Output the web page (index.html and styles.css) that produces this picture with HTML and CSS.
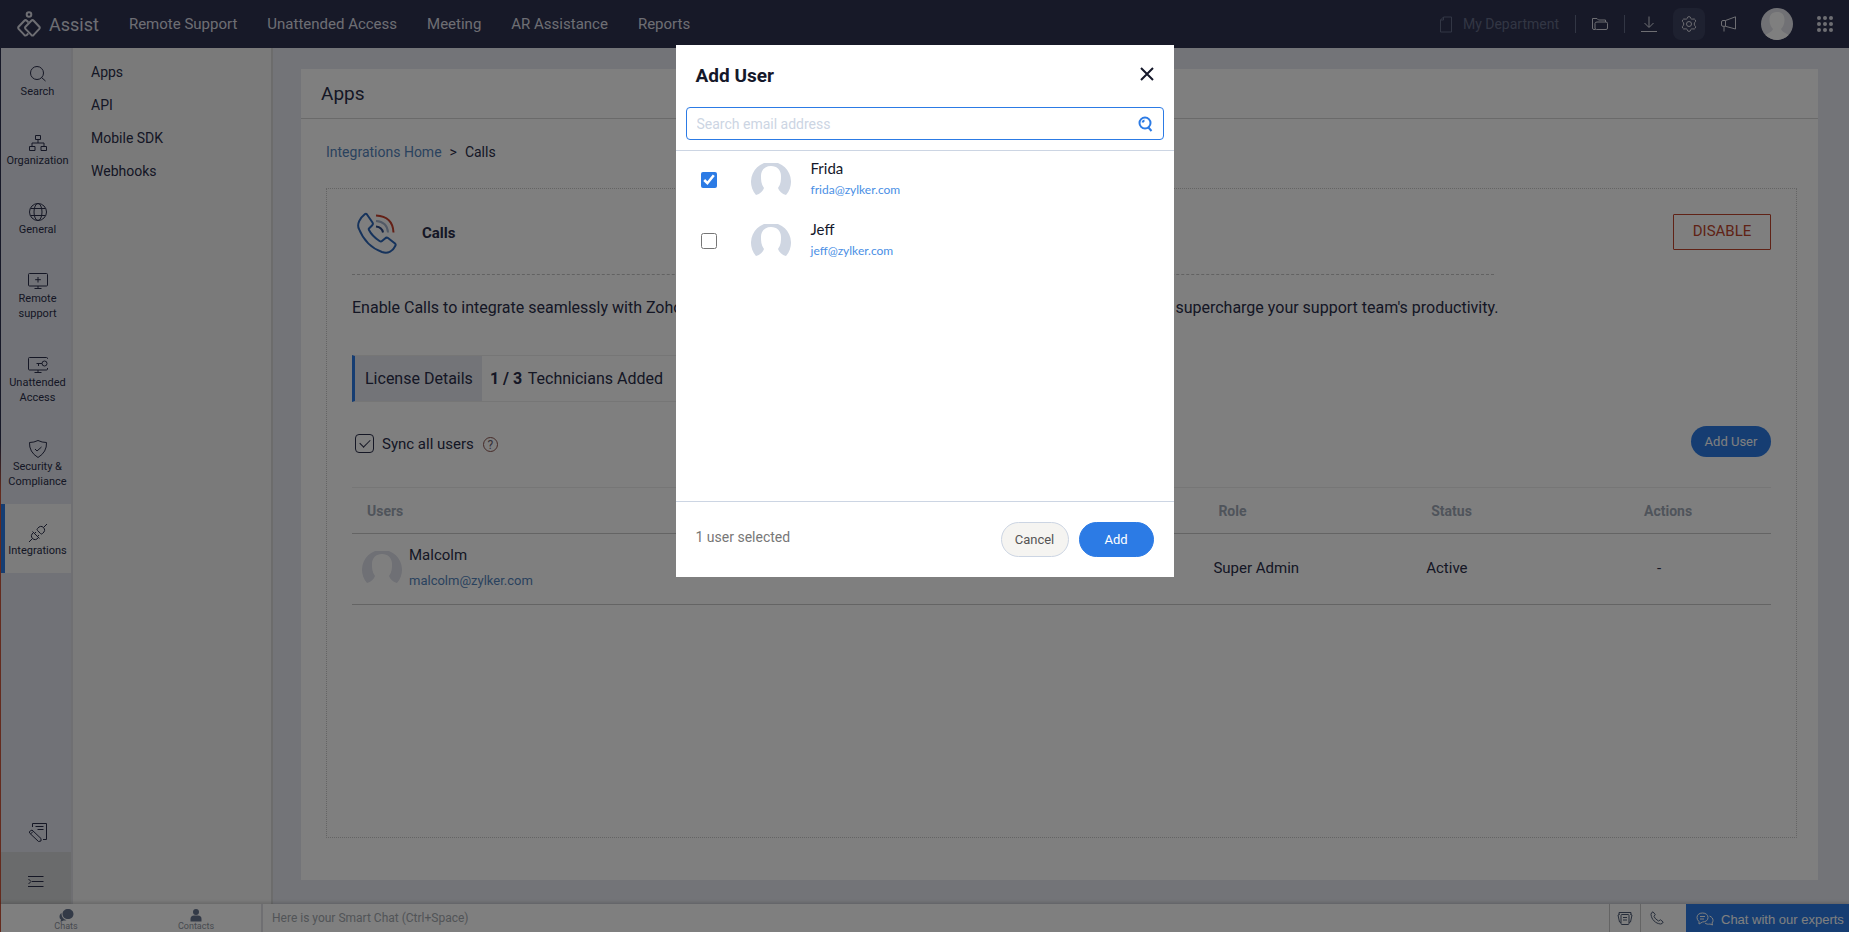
FILE: index.html
```
<!DOCTYPE html>
<html lang="en">
<head>
    <meta charset="UTF-8">
    <meta name="viewport" content="width=device-width, initial-scale=1.0">
    <title>Assist - Integrations</title>
    <link rel="stylesheet" href="styles.css">
</head>
<body>
    <!-- Shared avatar shape -->
    <svg class="defs" aria-hidden="true">
        <symbol id="avatar" viewBox="0 0 40 34">
            <path d="M5 32A20 20 0 1 1 35 32C31 31 28 28 27 25C30 21 30 17 30 13C30 7 26 3 20 3S10 7 10 13C10 17 10 21 13 25C12 28 9 31 5 32Z"/>
        </symbol>
    </svg>

    <div class="app">
        <header class="topbar">
            <a href="#" class="brand">
                <svg width="24" height="26" viewBox="0 0 24 26">
                    <circle cx="12" cy="3.500" r="2.300"/>
                    <path d="M14.300 9.700Q15.500 8.500 16.700 9.700L22.300 15.700Q23.200 16.800 22.300 17.900L16.700 23.900Q15.500 25 14.300 23.900L8.500 17.900Q7.600 16.800 8.500 15.700Z"/>
                    <path d="M11.300 11.200L9.800 9.700Q8.500 8.500 7.300 9.700L1.600 15.700Q.8 16.800 1.600 17.900L7.300 23.900Q8.500 25 9.800 23.900L11.300 22.400"/>
                </svg>
                <span>Assist</span>
            </a>
            <nav class="main-nav">
                <a href="#">Remote Support</a>
                <a href="#">Unattended Access</a>
                <a href="#">Meeting</a>
                <a href="#">AR Assistance</a>
                <a href="#">Reports</a>
            </nav>
            <div class="tools">
                <button class="department">
                    <svg width="12" height="17" viewBox="0 0 12 17"><path d="M3.500 1H11.500V16H.5V4L3.500 1V4H.5"/></svg>
                    My Department
                </button>
                <span class="divider"></span>
                <button class="tool" aria-label="Files">
                    <svg width="16" height="16" viewBox="0 0 16 16"><path d="M3.500 13.500H2Q.5 13.500 .5 12V2.500H5L6.500 4H13.500V6M5 6H14Q15.500 6 15.500 7.500V12Q15.500 13.500 14 13.500H4.500Q3 13.500 3 12V7.500Q3 6 5 6"/></svg>
                </button>
                <span class="divider"></span>
                <button class="tool" aria-label="Download">
                    <svg width="16" height="16" viewBox="0 0 16 16"><path d="M8 .5V11M3.500 7L8 11.500L12.500 7M0 15.500H16"/></svg>
                </button>
                <button class="tool tool-active" aria-label="Settings">
                    <svg width="16" height="16" viewBox="0 0 16 16"><circle cx="8" cy="8" r="2.500"/><path d="M6.200 2.500Q6.300.6 8 .6T9.800 2.500Q10.500 3.400 11.800 3.100Q13.600 2.500 14.400 4Q15.200 5.500 13.600 6.600Q12.800 8 13.600 9.400Q15.200 10.500 14.400 12Q13.600 13.500 11.800 12.900Q10.500 12.600 9.800 13.500Q9.700 15.400 8 15.400T6.200 13.500Q5.500 12.600 4.200 12.900Q2.400 13.500 1.600 12Q.8 10.500 2.400 9.400Q3.200 8 2.400 6.600Q.8 5.500 1.600 4Q2.400 2.500 4.200 3.100Q5.500 3.400 6.200 2.500Z"/></svg>
                </button>
                <button class="tool" aria-label="Announcements">
                    <svg width="16" height="16" viewBox="0 0 16 16"><path d="M4.500 4.500L14.500.8V13L4.500 10.300ZM4.500 4.500H2Q.5 4.500 .5 6V9Q.5 10.300 2 10.300H4.500M3 10.500V15.500"/></svg>
                </button>
                <button class="profile" aria-label="Profile">
                    <svg width="32" height="32" viewBox="0 0 32 32"><circle class="profile-bg" cx="16" cy="16" r="16"/><path class="profile-person" d="M16 4C10 4 8.500 8 8.500 12C8.500 16 10 19 12 21C11 24 7 25 4.500 27A16 16 0 0 0 27.500 27C25 25 21 24 20 21C22 19 23.500 16 23.500 12C23.500 8 22 4 16 4Z"/></svg>
                </button>
                <button class="tool tool-dots" aria-label="All apps">
                    <svg width="16" height="16" viewBox="0 0 16 16"><circle cx="2" cy="2" r="2"/><circle cx="8" cy="2" r="2"/><circle cx="14" cy="2" r="2"/><circle cx="2" cy="8" r="2"/><circle cx="8" cy="8" r="2"/><circle cx="14" cy="8" r="2"/><circle cx="2" cy="14" r="2"/><circle cx="8" cy="14" r="2"/><circle cx="14" cy="14" r="2"/></svg>
                </button>
            </div>
        </header>

        <div class="body">
            <div class="edge"></div>
            <nav class="rail">
                <a href="#" class="rail-item">
                    <svg width="20" height="20" viewBox="0 0 20 20"><circle cx="9" cy="9" r="6.500"/><path d="M13.500 13.500L17.500 17"/></svg>
                    Search
                </a>
                <a href="#" class="rail-item">
                    <svg width="20" height="20" viewBox="0 0 20 20"><path d="M7.500 2.500H12.500V6.500H7.500ZM1.500 13.500H7V17.500H1.500ZM13 13.500H18.500V17.500H13ZM10 6.500V10M4 13.500V10H16V13.500"/></svg>
                    Organization
                </a>
                <a href="#" class="rail-item">
                    <svg width="20" height="20" viewBox="0 0 20 20"><circle cx="10" cy="10" r="8.500"/><ellipse cx="10" cy="10" rx="4" ry="8.500"/><path d="M2.500 6.500H17.500M2.500 13.500H17.500"/></svg>
                    General
                </a>
                <a href="#" class="rail-item">
                    <svg width="20" height="20" viewBox="0 0 20 20"><rect x=".5" y="2.500" width="19" height="12.500" rx="1"/><path d="M10 6V11.500M7.200 8.700H12.800M10 15V17.500M6.500 17.500H13.500"/></svg>
                    Remote<br>support
                </a>
                <a href="#" class="rail-item">
                    <svg width="20" height="20" viewBox="0 0 20 20"><path d="M19.500 4V3.500Q19.500 2.500 18.500 2.500H1.500Q.5 2.500 .5 3.500V14Q.5 15 1.500 15H18.500Q19.500 15 19.500 14V13M10 15V17.500M6.500 17.500H13.500M14 8.500H8.500M10.500 8.500V11"/><circle cx="16.500" cy="8.500" r="2.500"/></svg>
                    Unattended<br>Access
                </a>
                <a href="#" class="rail-item">
                    <svg width="20" height="20" viewBox="0 0 20 20"><path d="M10 1.500Q14 3.500 18.500 3.500Q19 13 10 18.500Q1 13 1.500 3.500Q6 3.500 10 1.500ZM7 10L9 12L13.500 8"/></svg>
                    Security &amp;<br>Compliance
                </a>
                <a href="#" class="rail-item rail-active">
                    <svg width="20" height="20" viewBox="0 0 20 20"><path d="M1 19L4.500 15.500M15.500 4.500L19 1M5.500 9.500Q1.800 12.500 4.500 15.500Q7.500 18.200 10.500 14.500M4.500 8.500L11.500 15.500M9.500 5.500Q12.500 1.800 15.500 4.500Q18.200 7.500 14.500 10.500Q13.500 11.500 12.500 10.500L9.500 7.500Q8.500 6.500 9.500 5.500M6.500 10.500L8 9M9.500 13.500L11 12"/></svg>
                    Integrations
                </a>
                <a href="#" class="rail-feedback" aria-label="Feedback">
                    <svg width="20" height="20" viewBox="0 0 20 20"><path d="M4.500 5V1.500H18.500V17.500H15M7.500 4.500H15.500M9.500 7.500H15.500M1.500 9.500L4 8L13 16.500V19L10.500 19.500L1.500 11ZM2.500 12L5 9.500"/></svg>
                </a>
                <button class="rail-toggle" aria-label="Collapse menu">
                    <svg width="16" height="14" viewBox="0 0 16 14"><path d="M0 1.500H15.500M4 6.500H15.500M0 11.500H15.500M.5 4L3 6.500L.5 9"/></svg>
                </button>
            </nav>

            <nav class="submenu">
                <a href="#">Apps</a>
                <a href="#">API</a>
                <a href="#">Mobile SDK</a>
                <a href="#">Webhooks</a>
            </nav>

            <main class="content">
                <section class="card">
                    <h1>Apps</h1>
                    <div class="breadcrumb">
                        <a href="#">Integrations Home</a>
                        <span>&gt;</span>
                        <span>Calls</span>
                    </div>
                    <div class="integration">
                        <div class="integration-head">
                            <div class="integration-title">
                                <svg width="42" height="42" viewBox="0 0 42 42">
                                    <path class="phone" d="M9 2C4 6 .5 12 3 17C7 27 15 36 26 40C32 42 37 39 39.500 33.500Q40 32.500 39 31.500L32 26Q30.500 25 29 26.500L26 29Q25 30 23.500 29Q16 24 13 18Q12.500 17 13 16.500L16 13.500Q17.500 12 16.500 10.500L11 2.500Q10 1.300 9 2Z"/>
                                    <path class="wave-out" d="M20 3.500C31 4 37 10 37.500 20.500"/>
                                    <path class="wave-mid" d="M20 9C27.500 9.500 31.500 13 32 20.500"/>
                                    <path class="wave-in" d="M20 14.500C24 15 26.500 17 27 20.500"/>
                                </svg>
                                <h2>Calls</h2>
                            </div>
                            <button class="disable">DISABLE</button>
                        </div>
                        <p class="description">Enable Calls to integrate seamlessly with Zoho Assist, connect with customers over voice, resolve issues faster, and supercharge your support team's productivity.</p>
                        <div class="license">
                            <span class="license-label">License Details</span>
                            <span class="license-count"><b>1 / 3</b> Technicians Added</span>
                        </div>
                        <div class="sync-row">
                            <label class="sync">
                                <input type="checkbox" class="sync-box" checked>
                                Sync all users
                            </label>
                            <button class="help" aria-label="Help">?</button>
                            <button class="add-user">Add User</button>
                        </div>
                        <table class="users">
                            <thead>
                                <tr>
                                    <th class="col-user">Users</th>
                                    <th class="col-role">Role</th>
                                    <th class="col-status">Status</th>
                                    <th class="col-actions">Actions</th>
                                </tr>
                            </thead>
                            <tbody>
                                <tr>
                                    <td>
                                        <div class="user">
                                            <svg class="avatar" width="40" height="34"><use href="#avatar"/></svg>
                                            <div>
                                                <div class="user-name">Malcolm</div>
                                                <a href="#" class="user-email">malcolm@zylker.com</a>
                                            </div>
                                        </div>
                                    </td>
                                    <td>Super Admin</td>
                                    <td>Active</td>
                                    <td class="no-action">-</td>
                                </tr>
                            </tbody>
                        </table>
                    </div>
                </section>
            </main>
        </div>

        <footer class="chatbar">
            <button class="chat-tab">
                <svg width="15" height="13" viewBox="0 0 15 13"><path d="M9 0C12 0 14.500 2 14.500 5S12 10 9 10S3.500 8 3.500 5S6 0 9 0ZM2.500 4C1 5 .5 6.500 .5 7.500C.5 9 1 10 2 10.500L1.500 13L4.500 11.500C5.500 11.700 6.500 11.500 7.500 11C4.500 10.500 2.500 8 2.500 4Z"/></svg>
                Chats
            </button>
            <button class="chat-tab">
                <svg width="12" height="13" viewBox="0 0 12 13"><circle cx="6" cy="3" r="3"/><path d="M.5 10Q.5 6.500 4 6.500H8Q11.500 6.500 11.500 10V12.500H.5Z"/></svg>
                Contacts
            </button>
            <input type="text" class="smart-chat" aria-label="Smart Chat" placeholder="Here is your Smart Chat (Ctrl+Space)">
            <button class="chat-tool" aria-label="Notes">
                <svg width="16" height="14" viewBox="0 0 16 14"><rect x="4" y="3.500" width="8" height="10" rx="1"/><path d="M6 6.500H10M6 9H10M4 11.500L2.500 11L1 4L3 3M12 11.500L13.500 11L15 4L13 3M2 3V1.500L14 1.500V3"/></svg>
            </button>
            <button class="chat-tool chat-call" aria-label="Call">
                <svg width="14" height="14" viewBox="0 0 14 14"><path d="M3 .8Q1 1.500 1 3.500C1.500 8.500 5.500 12.500 10.500 13Q12.500 13 13.200 11L10.500 8.800L8.500 10Q5 8 4 5.500L5.200 3.500Z"/></svg>
            </button>
            <button class="experts">
                <svg width="18" height="14" viewBox="0 0 18 14"><path d="M3 9.500Q1 8 1 5.500C1 3 3 1 6.500 1C10 1 12 3 12 5.500S10 10 6.500 10L3 12ZM4 4.500H9M4 7H8M13.500 4C16 5 17 6.500 17 8.500Q17 10 16 11L16.500 13L14 12C12 12.500 10 12 9 11"/></svg>
                Chat with our experts
            </button>
        </footer>

        <div class="overlay">
            <div class="modal" role="dialog" aria-labelledby="modalTitle">
                <div class="modal-head">
                    <h2 id="modalTitle">Add User</h2>
                    <button class="close" aria-label="Close">
                        <svg width="14" height="14" viewBox="0 0 14 14"><path d="M1 1L13 13M13 1L1 13"/></svg>
                    </button>
                </div>
                <div class="search">
                    <input type="text" aria-label="Search email address" placeholder="Search email address">
                    <svg width="16" height="16" viewBox="0 0 16 16"><circle cx="8" cy="7" r="5.500"/><path d="M5.500 6.500Q5.800 4.800 7.500 4.500M11 11L14.500 15"/></svg>
                </div>
                <div class="modal-list">
                    <label class="pick">
                        <input type="checkbox" checked>
                        <svg class="avatar" width="40" height="34"><use href="#avatar"/></svg>
                        <span class="pick-text">
                            <span class="pick-name">Frida</span>
                            <span class="pick-email">frida@zylker.com</span>
                        </span>
                    </label>
                    <label class="pick">
                        <input type="checkbox">
                        <svg class="avatar" width="40" height="34"><use href="#avatar"/></svg>
                        <span class="pick-text">
                            <span class="pick-name">Jeff</span>
                            <span class="pick-email">jeff@zylker.com</span>
                        </span>
                    </label>
                </div>
                <div class="modal-foot">
                    <span class="selected">1 user selected</span>
                    <button class="cancel">Cancel</button>
                    <button class="add">Add</button>
                </div>
            </div>
        </div>
    </div>
</body>
</html>
```
FILE: styles.css
```
* {
    box-sizing: border-box;
}
body {
    margin: 0;
    padding: 0 1px 2px 0;
    height: 100vh;
    background: white;
    font-family: Roboto, 'Liberation Sans', sans-serif;
    font-size: 16px;
    color: #2a2e4a;
}
button {
    font-family: inherit;
    border: none;
    background: none;
    padding: 0;
    cursor: pointer;
}
a {
    color: inherit;
    text-decoration: none;
}
h1, h2, p {
    margin: 0;
}
svg {
    fill: none;
    stroke: currentColor;
    flex-shrink: 0;
}
.defs {
    position: absolute;
    width: 0;
    height: 0;
}
.app {
    position: relative;
    height: 100%;
    display: flex;
    flex-direction: column;
    overflow: hidden;
}

/* Top bar */
.topbar {
    height: 48px;
    flex-shrink: 0;
    display: flex;
    align-items: center;
    padding: 0 16px 0 17px;
    background: #2e3250;
    color: #dcdde6;
}
.brand {
    display: flex;
    align-items: center;
    gap: 8px;
    font-size: 18px;
    margin-right: 30px;
}
.brand svg {
    stroke-width: 2;
}
.main-nav {
    display: flex;
    gap: 30px;
    font-size: 15px;
}
.tools {
    margin-left: auto;
    display: flex;
    align-items: center;
    gap: 16px;
}
.department {
    display: flex;
    align-items: center;
    gap: 11px;
    font-size: 14px;
    color: #656d88;
}
.divider {
    width: 1px;
    height: 18px;
    background: #656d88;
}
.tool {
    display: flex;
    color: #dcdde6;
}
.tool + .tool {
    margin-left: 8px;
}
.tool.tool-active {
    padding: 8px;
    margin: 0 -8px 0 0;
    border-radius: 8px;
    background: #3d4260;
}
.tool-active + .tool {
    margin-left: 8px;
}
.tool-dots svg {
    fill: currentColor;
    stroke: none;
}
.profile {
    display: flex;
    margin: 0 8px;
}
.profile-bg {
    fill: #e2e3ea;
    stroke: none;
}
.profile-person {
    fill: white;
    stroke: none;
}

/* Left navigation */
.body {
    flex: 1;
    min-height: 0;
    display: flex;
}
.edge {
    width: 1px;
    background: linear-gradient(#2e3250 46%, #c8563c 52%);
}
.rail {
    width: 72px;
    flex-shrink: 0;
    display: flex;
    flex-direction: column;
    border-right: 2px solid #dedfe4;
    background: #e3e5ee;
}
.rail-item {
    display: flex;
    flex-direction: column;
    align-items: center;
    padding: 19px 0 15px 3px;
    font-size: 11px;
    line-height: 15px;
    text-align: center;
}
.rail-item:first-child {
    padding-top: 16px;
}
.rail-active {
    background: #f8f8f8;
    box-shadow: inset 4px 0 #2c7be5;
}
.rail-feedback {
    display: flex;
    justify-content: center;
    margin-top: auto;
    padding: 0 0 10px 3px;
}
.rail-toggle {
    height: 52px;
    display: flex;
    align-items: center;
    justify-content: center;
    padding-top: 8px;
    background: #d5d7d8;
    color: #2a2e4a;
}
.submenu {
    width: 200px;
    flex-shrink: 0;
    display: flex;
    flex-direction: column;
    padding: 8px 18px;
    border-right: 2px solid #d8d9d9;
    background: #f5f5f5;
    font-size: 14px;
    line-height: 33px;
}

/* Page content */
.content {
    flex: 1;
    display: flex;
    padding: 21px 31px 24px 28px;
    background: #e7e9f1;
}
.card {
    flex: 1;
    display: flex;
    flex-direction: column;
    background: white;
}
h1 {
    padding: 0 20px;
    border-bottom: 1px solid #d5d5d5;
    font-size: 19px;
    font-weight: 400;
    line-height: 49px;
}
.breadcrumb {
    display: flex;
    gap: 8px;
    padding: 24px 25px 26px;
    font-size: 14px;
    line-height: 19px;
}
.breadcrumb a, .user-email {
    color: #5585bd;
}
.integration {
    flex: 1;
    margin: 0 21px 42px 25px;
    padding: 0 25px;
    border: 1px dotted #c8c8c8;
}
.integration-head {
    display: flex;
    justify-content: space-between;
}
.integration-title {
    width: 1142px;
    flex: 0 1 auto;
    display: flex;
    align-items: center;
    gap: 24px;
    padding: 2px 4px 0;
    height: 86px;
    border-bottom: 1px dashed #c4c4c4;
}
.integration-title h2 {
    font-size: 15px;
}
.phone {
    stroke: #2c66b8;
    stroke-width: 2;
}
.wave-out {
    stroke: #c8402c;
    stroke-width: 2;
}
.wave-mid {
    stroke: #a5b4cc;
    stroke-width: 2;
}
.wave-in {
    stroke: #2c4a88;
    stroke-width: 2;
}
.disable {
    width: 98px;
    height: 36px;
    margin-top: 25px;
    padding-bottom: 3px;
    border: 1px solid #c0452c;
    border-radius: 1px;
    font-size: 15px;
    color: #c0452c;
}
.description {
    padding-top: 23px;
    line-height: 20px;
}
.license {
    width: 560px;
    display: flex;
    align-items: center;
    margin-top: 37px;
    border: 1px solid #ececec;
    border-left: 3px solid #2c7be5;
    line-height: 45px;
}
.license-label {
    padding: 0 9px 0 10px;
    background: #e7e9f1;
}
.license-count {
    padding: 0 8px;
}
.license-count b {
    margin-right: 2px;
}
.sync-row {
    display: flex;
    align-items: center;
    margin-top: 24px;
    font-size: 15px;
}
.sync {
    display: flex;
    align-items: center;
    gap: 8px;
    padding: 4px 0 0 3px;
}
.sync-box {
    appearance: none;
    width: 19px;
    height: 19px;
    margin: 0;
    display: grid;
    place-items: center;
    border: 1px solid #2a2e4a;
    border-radius: 4px;
}
.sync-box:checked::after {
    content: '';
    width: 9px;
    height: 5px;
    margin-top: -3px;
    border-left: 1px solid #2a2e4a;
    border-bottom: 1px solid #2a2e4a;
    transform: rotate(-45deg);
}
.help {
    width: 15px;
    height: 15px;
    margin: 6px 0 0 9px;
    border: 1px solid #8c5550;
    border-radius: 50%;
    font-size: 12px;
    line-height: 12px;
    color: #6c6070;
}
.add-user {
    width: 80px;
    height: 31px;
    margin-left: auto;
    border-radius: 16px;
    background: #2c7be5;
    color: white;
    font-size: 13px;
}
.users {
    width: 100%;
    margin-top: 30px;
    border-collapse: collapse;
    table-layout: fixed;
    border-top: 1px solid #ececec;
}
.users th {
    height: 46px;
    padding: 0 15px;
    border-bottom: 1px solid #c8c8c8;
    font-size: 14px;
    font-weight: 700;
    text-align: left;
    color: #9fa9b6;
}
.users td {
    height: 71px;
    padding: 0 10px 2px;
    border-bottom: 1px solid #c8c8c8;
    font-size: 15px;
}
.col-user {
    width: 60%;
}
.col-role, .col-status {
    width: 15%;
}
.users td.no-action {
    padding-left: 28px;
}
.user {
    display: flex;
    align-items: center;
    gap: 7px;
    line-height: 25px;
}
.user-email {
    font-size: 13px;
}
.avatar {
    fill: #cfd6e2;
    stroke: none;
}
.user .avatar {
    fill: #dee0ea;
}

/* Bottom chat bar */
.chatbar {
    height: 28px;
    flex-shrink: 0;
    display: flex;
    border-left: 1px solid #c8563c;
    box-shadow: 0 -1px 4px rgba(0,0,0,0.2);
    background: white;
    z-index: 1;
}
.chat-tab {
    width: 130px;
    display: flex;
    flex-direction: column;
    align-items: center;
    padding-top: 5px;
    font-size: 9px;
    line-height: 9px;
    color: #8d939e;
}
.chat-tab svg {
    fill: #66758f;
    stroke: none;
}
.smart-chat {
    flex: 1;
    padding: 0 9px;
    border: none;
    border-left: 2px solid #dedfe4;
    font-family: inherit;
    font-size: 12px;
}
.smart-chat::placeholder {
    color: #a3a8ae;
}
.chat-tool {
    width: 31px;
    display: flex;
    align-items: center;
    justify-content: center;
    border-left: 1px solid #c8c8c8;
    color: #4d5b75;
}
.chat-call {
    width: 46px;
    justify-content: flex-start;
    padding-left: 9px;
}
.experts {
    width: 163px;
    display: flex;
    align-items: center;
    gap: 7px;
    padding: 2px 0 0 10px;
    background: #2c7be5;
    font-family: 'Liberation Sans', Arial, sans-serif;
    font-size: 13px;
    color: white;
    white-space: nowrap;
}

/* Add User dialog */
.overlay {
    position: absolute;
    inset: 0;
    z-index: 2;
    display: flex;
    justify-content: center;
    align-items: flex-start;
    padding-top: 45px;
    background: rgba(0,0,0,0.5);
}
.modal {
    width: 498px;
    display: flex;
    flex-direction: column;
    background: white;
    color: #15182a;
}
.modal-head {
    display: flex;
    align-items: center;
    justify-content: space-between;
    height: 62px;
    padding: 0 20px 1px;
}
.modal-head h2 {
    font-size: 19px;
    font-weight: 700;
}
.close {
    display: flex;
    margin-bottom: 4px;
    color: #15182a;
}
.close svg {
    stroke-width: 2;
}
.search {
    height: 33px;
    display: flex;
    align-items: center;
    margin: 0 10px 10px;
    padding: 0 10px;
    border: 1px solid #2c7be5;
    border-radius: 4px;
}
.search input {
    flex: 1;
    border: none;
    outline: none;
    padding: 0;
    font-family: inherit;
    font-size: 14px;
}
.search input::placeholder {
    color: #ccd5e3;
}
.search svg {
    color: #2c7be5;
    stroke-width: 2;
}
.modal-list {
    height: 352px;
    border-top: 1px solid #ccd5e3;
    border-bottom: 1px solid #ccd5e3;
    overflow-y: auto;
}
.pick {
    display: flex;
    align-items: center;
    height: 61px;
    padding: 0 0 4px 25px;
    font-family: Lato, sans-serif;
}
.pick input {
    width: 16px;
    height: 16px;
    margin: 0 34px 0 0;
    accent-color: #2c7be5;
}
.pick .avatar {
    margin-right: 20px;
}
.pick-text {
    padding-bottom: 2px;
}
.pick-name, .pick-email {
    display: block;
    font-size: 15px;
    line-height: 22px;
}
.pick-email {
    font-size: 12px;
    color: #4a8fe5;
}
.modal-foot {
    display: flex;
    align-items: center;
    gap: 10px;
    height: 75px;
    padding: 0 20px;
}
.selected {
    margin-right: auto;
    padding-bottom: 5px;
    font-size: 14px;
    color: #777;
}
.cancel, .add {
    width: 68px;
    height: 35px;
    border: 1px solid #ccd5e3;
    border-radius: 18px;
    background: #f5f4f1;
    font-size: 13px;
    color: #555;
}
.add {
    width: 75px;
    border-color: #2c7be5;
    background: #2c7be5;
    color: white;
}
```
